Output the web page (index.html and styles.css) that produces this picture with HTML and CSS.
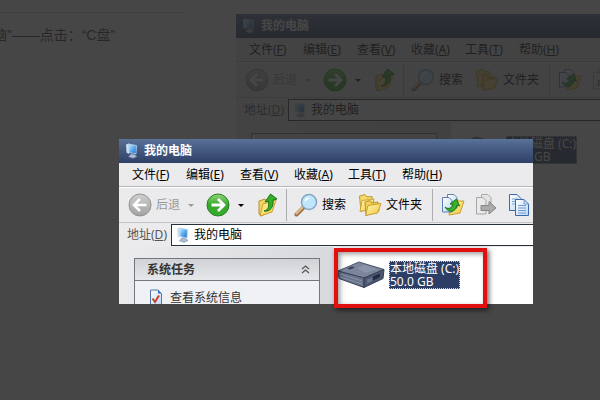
FILE: index.html
```html
<!DOCTYPE html>
<html lang="zh-CN">
<head>
  <meta charset="UTF-8">
  <meta name="viewport" content="width=device-width, initial-scale=1.0">
  <title>我的电脑</title>
  <link rel="stylesheet" href="styles.css">
</head>
<body>
  <!-- Shared icons -->
  <svg class="sprite" aria-hidden="true">
    <defs>
      <linearGradient id="g-green" x1="0" y1="0" x2="0" y2="1"><stop offset="0" stop-color="#8fd673"/><stop offset=".5" stop-color="#35a72c"/><stop offset="1" stop-color="#37ad2c"/></linearGradient>
      <linearGradient id="g-gray" x1="0" y1="0" x2="0" y2="1"><stop offset="0" stop-color="#cfcfcf"/><stop offset="1" stop-color="#a2a2a2"/></linearGradient>
      <linearGradient id="g-folder" x1="0" y1="0" x2="1" y2="1"><stop offset="0" stop-color="#fff6b0"/><stop offset="1" stop-color="#f3c63e"/></linearGradient>
      <linearGradient id="g-screen" x1="0" y1="0" x2="1" y2="1"><stop offset="0" stop-color="#d5efff"/><stop offset=".5" stop-color="#5aaef0"/><stop offset="1" stop-color="#1f62c4"/></linearGradient>
      <linearGradient id="g-page" x1="0" y1="0" x2="1" y2="1"><stop offset="0" stop-color="#fff"/><stop offset="1" stop-color="#b9d8f5"/></linearGradient>
    </defs>
    <symbol id="i-computer" viewBox="0 0 14 16">
      <path d="M1 1.5L4 .5V11L1.5 9.5Z" fill="#cfe0f2"/>
      <path d="M3.5 1L11.5 2.5L11 11L4 9.5Z" fill="url(#g-screen)" stroke="#b9d4ee" stroke-width=".8"/>
      <path d="M6 11L9.5 11.5L12 13.5L8 15.3L3.5 13.8Z" fill="#aebdd3" stroke="#6b83ab" stroke-width=".6"/>
    </symbol>
    <symbol id="i-back" viewBox="0 0 24 24">
      <circle cx="12" cy="12" r="11" fill="url(#g-gray)" stroke="#929292"/>
      <path d="M18.5 12H6.5M12 6L6 12L12 18" fill="none" stroke="#fff" stroke-width="2.6"/>
    </symbol>
    <symbol id="i-forward" viewBox="0 0 24 24">
      <circle cx="12" cy="12" r="11" fill="url(#g-green)" stroke="#2b7f25"/>
      <path d="M5.5 12H17.5M12 6L18 12L12 18" fill="none" stroke="#fff" stroke-width="2.8"/>
    </symbol>
    <symbol id="i-up" viewBox="0 0 22 24">
      <path d="M2 8L8 6L9.5 8L15 6.5V18L4 23L2 21Z" fill="#efd268" stroke="#b99127"/>
      <path d="M6 11L19 7L15 19L3 23Z" fill="url(#g-folder)" stroke="#c9a02f"/>
      <path d="M7 18C12 17 12 13 11.5 8L8 9L13.5 1L20 6L16 7C17 14 13 19 7 18Z" fill="#36ad2b" stroke="#187513"/>
    </symbol>
    <symbol id="i-search" viewBox="0 0 24 24">
      <path d="M9.5 14.5L2.5 21.5" stroke="#9b7048" stroke-width="4" stroke-linecap="round"/>
      <path d="M8.5 14.5L2.5 20.5" stroke="#e8bd83" stroke-width="2" stroke-linecap="round"/>
      <circle cx="15" cy="9" r="7.5" fill="#bfe6fb" stroke="#88a7c4" stroke-width="1.6"/>
      <path d="M10.5 9C10.5 5.5 13 4 16 4.5C14 6 12.5 7.5 10.5 9Z" fill="#fff"/>
    </symbol>
    <symbol id="i-folders" viewBox="0 0 24 24">
      <path d="M1.5 3L7 1.5L9 4L14 3.5L15 14L3 18.5Z" fill="#f6d969" stroke="#c09a32"/>
      <path d="M2 18.5L4 7.5L16 6L14 16Z" fill="url(#g-folder)" stroke="#cda63c"/>
      <path d="M7 9L12 7.5L14 10L20 9L21 18L8 22.5Z" fill="#f4d057" stroke="#b99127"/>
      <path d="M7.5 22.5L10 12.5L23 10.5L19.5 20Z" fill="url(#g-folder)" stroke="#c9a02f"/>
    </symbol>
    <symbol id="i-move" viewBox="0 0 24 24">
      <path d="M10 8L15 6L17 8L23 8L19 20L8 22Z" fill="url(#g-folder)" stroke="#c9a02f"/>
      <path d="M6.5 1.5H13L16 4.5V15H6.5Z" fill="url(#g-page)" stroke="#5d7fb4"/>
      <path d="M1.5 4.5H8L11 7.5V19H1.5Z" fill="url(#g-page)" stroke="#5d7fb4"/>
      <path d="M4 14C8 17 11 15 12 11L9 11L15.5 6L18.5 13L16 12C15 19 8 21 4 14Z" fill="#3ab02e" stroke="#187513"/>
    </symbol>
    <symbol id="i-copyto" viewBox="0 0 24 24">
      <path d="M7.5 1.5H14L17 4.5V16H7.5Z" fill="#e4e4e4" stroke="#aaa"/>
      <path d="M2.5 4.5H9L12 7.5V21H2.5Z" fill="#e9e9e9" stroke="#a6a6a6"/>
      <path d="M7 12.5H15V8.5L22 15L15 21V17.5H7Z" fill="#aaa" stroke="#858585"/>
    </symbol>
    <symbol id="i-copy" viewBox="0 0 24 24">
      <path d="M2.5 1.5H10L14 5.5V17.5H2.5Z" fill="url(#g-page)" stroke="#3d69aa"/>
      <path d="M5 6H11M5 8.5H11M5 11H11" stroke="#7ba6d8"/>
      <path d="M8.5 6.5H17L21.5 11V22.5H8.5Z" fill="url(#g-page)" stroke="#3d69aa"/>
      <path d="M17 6.5V11H21.5M11 12.5H19M11 15H19M11 17.5H19M11 20H19" fill="none" stroke="#6f9bd1"/>
    </symbol>
    <symbol id="i-info" viewBox="0 0 14 17">
      <path d="M1.5 1H9L12.5 4.5V16H1.5Z" fill="url(#g-page)" stroke="#4e75ae"/>
      <path d="M9 1V4.5H12.5Z" fill="#3b6fc0"/>
      <path d="M3.5 9.5L6 13L10 6.5" fill="none" stroke="#c9402b" stroke-width="2"/>
    </symbol>
    <symbol id="i-drive" viewBox="0 0 48 28">
      <path d="M1 10L22 1L47 8.5L27 17Z" fill="#7b859b" stroke="#4b5368"/>
      <path d="M1 10L27 17V26.5L2 17.5Z" fill="#69738a" stroke="#39425a"/>
      <path d="M27 17L47 8.5L46 17.5L27 26.5Z" fill="#4c566f" stroke="#343c52"/>
      <path d="M10 7.5L15 5.5L18 6.5L13 8.5Z" fill="#333c52"/>
      <path d="M20 7L28 4L40 8L29 12Z" fill="#8a94a8"/>
      <path d="M3 13L25 20M3 16L25 23" stroke="#8792a8"/>
      <path d="M30 18.5L35 16.5V20L30 22.5Z" fill="#68738d"/>
      <path d="M36 15.5L43 12.5V16L36 19.5Z" fill="#202a49"/>
    </symbol>
  </svg>

  <main class="desktop">
    <article class="article">
      <p>脑”——点击：“C盘”</p>
    </article>

    <section class="window window-back" inert>
      <header class="titlebar"><svg class="icon-pc"><use href="#i-computer"/></svg>我的电脑</header>
      <nav class="menubar">
        <button>文件(<u>F</u>)</button>
        <button>编辑(<u>E</u>)</button>
        <button>查看(<u>V</u>)</button>
        <button>收藏(<u>A</u>)</button>
        <button>工具(<u>T</u>)</button>
        <button>帮助(<u>H</u>)</button>
      </nav>
      <div class="toolbar">
        <div class="group group-nav">
          <button class="muted"><svg class="icon"><use href="#i-back"/></svg>后退<span class="caret"></span></button>
          <button aria-label="前进"><svg class="icon"><use href="#i-forward"/></svg><span class="caret"></span></button>
          <button aria-label="向上"><svg class="icon"><use href="#i-up"/></svg></button>
        </div>
        <div class="group group-find">
          <button><svg class="icon"><use href="#i-search"/></svg>搜索</button>
          <button><svg class="icon"><use href="#i-folders"/></svg>文件夹</button>
        </div>
        <div class="group group-edit">
          <button aria-label="移至"><svg class="icon"><use href="#i-move"/></svg></button>
          <button aria-label="复制到"><svg class="icon"><use href="#i-copyto"/></svg></button>
          <button aria-label="复制"><svg class="icon"><use href="#i-copy"/></svg></button>
        </div>
      </div>
      <label class="address">
        <span class="address-label">地址(<u>D</u>)</span>
        <span class="address-box"><svg class="icon-pc"><use href="#i-computer"/></svg><input type="text" value="我的电脑"></span>
      </label>
      <div class="content">
        <aside class="sidebar">
          <div class="tasks"></div>
        </aside>
        <div class="files">
          <button class="drive"><svg class="icon-drive"><use href="#i-drive"/></svg><span class="drive-name">本地磁盘 (C:)<br>50.0 GB</span></button>
        </div>
      </div>
    </section>

    <div class="scrim"></div>

    <section class="window window-front">
      <header class="titlebar"><svg class="icon-pc"><use href="#i-computer"/></svg>我的电脑</header>
      <nav class="menubar">
        <button>文件(<u>F</u>)</button>
        <button>编辑(<u>E</u>)</button>
        <button>查看(<u>V</u>)</button>
        <button>收藏(<u>A</u>)</button>
        <button>工具(<u>T</u>)</button>
        <button>帮助(<u>H</u>)</button>
      </nav>
      <div class="toolbar">
        <div class="group group-nav">
          <button class="muted"><svg class="icon"><use href="#i-back"/></svg>后退<span class="caret"></span></button>
          <button aria-label="前进"><svg class="icon"><use href="#i-forward"/></svg><span class="caret"></span></button>
          <button aria-label="向上"><svg class="icon"><use href="#i-up"/></svg></button>
        </div>
        <div class="group group-find">
          <button><svg class="icon"><use href="#i-search"/></svg>搜索</button>
          <button><svg class="icon"><use href="#i-folders"/></svg>文件夹</button>
        </div>
        <div class="group group-edit">
          <button aria-label="移至"><svg class="icon"><use href="#i-move"/></svg></button>
          <button aria-label="复制到"><svg class="icon"><use href="#i-copyto"/></svg></button>
          <button aria-label="复制"><svg class="icon"><use href="#i-copy"/></svg></button>
        </div>
      </div>
      <label class="address">
        <span class="address-label">地址(<u>D</u>)</span>
        <span class="address-box"><svg class="icon-pc"><use href="#i-computer"/></svg><input type="text" value="我的电脑"></span>
      </label>
      <div class="content">
        <aside class="sidebar">
          <div class="tasks">
            <button class="tasks-head">系统任务
              <svg class="chevrons" viewBox="0 0 9 9"><path d="M1 4L4.5 1L8 4M1 8L4.5 5L8 8" fill="none" stroke="#555" stroke-width="1.2"/></svg>
            </button>
            <a class="task" href="#"><svg class="icon-info"><use href="#i-info"/></svg>查看系统信息</a>
          </div>
        </aside>
        <div class="files">
          <button class="drive"><svg class="icon-drive"><use href="#i-drive"/></svg><span class="drive-name">本地磁盘 (C:)<br>50.0 GB</span></button>
        </div>
      </div>
    </section>

    <div class="marker"></div>
  </main>
</body>
</html>
```

FILE: styles.css
```css
* {
  box-sizing: border-box;
}

body {
  margin: 0;
  font-family: "Noto Sans", "Noto Sans CJK SC", sans-serif;
  font-size: 12px;
  line-height: 16px;
  color: #000;
}

button,
input {
  padding: 0;
  border: none;
  background: none;
  font: inherit;
  color: inherit;
}

button {
  display: flex;
  align-items: center;
  white-space: nowrap;
}

svg {
  flex: none;
}

.sprite {
  position: absolute;
  width: 0;
  height: 0;
}

.desktop {
  position: relative;
  min-height: 100vh;
  overflow: hidden;
  background: #fff;
}

/* Page text behind everything */
.article {
  width: 185px;
  padding-top: 12px;
}

.article p {
  margin: 0;
  padding-top: 12px;
  border-top: 1px solid #ccc;
  font-family: "Liberation Sans", "Noto Sans CJK SC", sans-serif;
  font-size: 14px;
  line-height: 20px;
  text-indent: -7px;
  color: #333;
}

.scrim {
  position: absolute;
  inset: 0;
  background: rgba(38, 38, 38, 0.85);
}

/* Windows */
.window {
  position: absolute;
  display: flex;
  flex-direction: column;
  overflow: hidden;
  background: #ebebed;
}

.window-back {
  top: 14px;
  left: 236px;
  right: 0;
}

.window-front {
  top: 139px;
  left: 119px;
  right: 67px;
  bottom: 96px;
}

.titlebar {
  display: flex;
  align-items: center;
  gap: 5px;
  flex: none;
  height: 24px;
  padding-left: 6px;
  background: linear-gradient(#5a7297, #43577f 50%, #2e4066);
  color: #fff;
  font-weight: bold;
}

.icon-pc {
  width: 14px;
  height: 16px;
}

.menubar {
  display: grid;
  grid-template-columns: repeat(6, 54px);
  flex: none;
  height: 24px;
  padding-left: 13px;
  border-bottom: 1px solid #b5b5b8;
}

/* Toolbar */
.toolbar {
  display: flex;
  align-items: center;
  flex: none;
  height: 36px;
  border-top: 1px solid #fff;
  border-bottom: 1px solid #c4c4c6;
}

.group {
  display: flex;
  align-items: center;
  flex: none;
  height: 32px;
}

.group + .group {
  border-left: 1px solid #adadb0;
}

.group-nav {
  gap: 12px;
  padding: 0 6px 0 9px;
}

.group-find {
  gap: 12px;
  padding: 0 10px 0 7px;
}

.group-edit {
  gap: 9px;
  padding-left: 8px;
}

.group button {
  gap: 4px;
}

.icon {
  width: 24px;
  height: 24px;
}

.muted {
  color: #999;
}

.caret {
  margin-left: 4px;
  border: 3px solid transparent;
  border-top-color: currentColor;
  border-bottom: none;
}

/* Address bar */
.address {
  display: flex;
  align-items: center;
  gap: 4px;
  flex: none;
  height: 24px;
  padding-left: 8px;
  color: #555;
}

.address-label {
  flex: none;
  width: 40px;
  white-space: nowrap;
}

.address-box {
  display: flex;
  align-items: center;
  gap: 4px;
  flex: 1;
  height: 22px;
  padding-left: 4px;
  border: 1px solid #26313c;
  border-right: none;
  background: #fff;
  color: #000;
}

.address-box input {
  flex: 1;
  min-width: 0;
}

/* Content */
.content {
  display: flex;
  flex: 1;
  background: #fff;
}

.sidebar {
  flex: none;
  width: 215px;
  padding: 11px 14px 0 15px;
  background: linear-gradient(90deg, #ebebed, #d8d9dd);
}

.tasks {
  min-height: 24px;
  border: 1px solid #73767e;
  background: #f0f1f5;
}

.tasks-head {
  justify-content: space-between;
  width: 100%;
  height: 22px;
  padding: 0 9px 0 12px;
  border-bottom: 1px solid #73767e;
  background: linear-gradient(#d0d2d6, #e6e7ea);
  color: #333;
  font-weight: bold;
}

.chevrons {
  width: 9px;
  height: 9px;
}

.task {
  display: flex;
  align-items: center;
  gap: 7px;
  padding: 8px 0 4px 14px;
  color: #333;
  line-height: 14px;
  text-decoration: none;
}

.icon-info {
  width: 14px;
  height: 17px;
}

.files {
  flex: 1;
  padding: 14px 0 0 3px;
}

.drive {
  gap: 4px;
}

.icon-drive {
  width: 48px;
  height: 28px;
}

.drive-name {
  border: 1px dotted #c8cddb;
  background: #2c3d66;
  color: #fff;
  line-height: 13px;
  text-align: left;
}

/* Red frame round the drive */
.marker {
  position: absolute;
  top: 248px;
  left: 334px;
  width: 153px;
  height: 60px;
  border: 4px solid #e01010;
  box-shadow: 2px 2px 5px rgba(0, 0, 0, 0.6), inset 2px 2px 5px rgba(0, 0, 0, 0.4);
}
```
